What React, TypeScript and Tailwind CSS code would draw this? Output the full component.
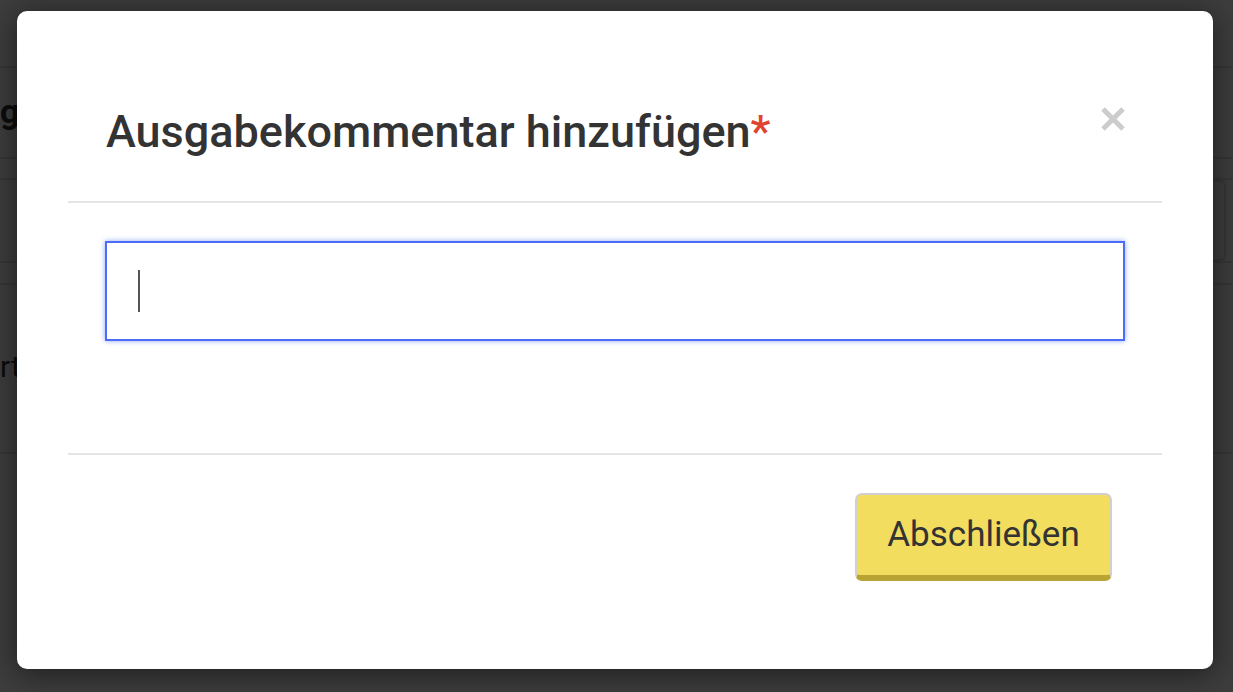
export default function App() {
  return (
    <div className="relative w-[1233px] h-[692px] overflow-hidden bg-white text-[#333] font-['Roboto',sans-serif]">
      {/* page behind the modal */}
      <div className="h-[68px] border-b-2 border-[#e2e2e2]" />
      <div className="h-[91px] border-b-2 border-[#e2e2e2] flex items-center">
        <span className="text-[34px] font-bold leading-none pb-1">g</span>
      </div>
      <div className="h-[85px] border-y-2 border-[#e2e2e2] mt-[19px] flex justify-end pr-[7px]">
        <div className="w-[60px] h-full rounded-md border-2 border-[#e2e2e2]" />
      </div>
      <div className="h-[171px] border-y-2 border-[#e2e2e2] mt-[20px] flex items-center">
        <span className="text-[30px] leading-none -mt-[4px]">rt</span>
      </div>

      {/* overlay */}
      <div className="absolute inset-0 bg-black/[0.76] pt-[11px] pl-[17px]">
        <div className="w-[1196px] h-[658px] bg-white rounded-[10px] shadow-[0_4px_30px_rgba(0,0,0,0.55)] px-[51px] flex flex-col">
          {/* header */}
          <div className="h-[192px] border-b-2 border-[#e5e5e5] flex items-center justify-between px-[38px] pt-[50px]">
            <h2 className="text-[45px] font-medium leading-none text-[#333]">
              Ausgabekommentar hinzufügen<span className="text-[#e0442c]">*</span>
            </h2>
            <button type="button" aria-label="Schließen" className="-mt-[24px] -mr-[1px]">
              <svg width="24" height="24" viewBox="0 0 24 24">
                <path d="M2 2 L22 22 M22 2 L2 22" stroke="#cccccc" strokeWidth="5" />
              </svg>
            </button>
          </div>

          {/* body */}
          <div className="h-[252px] border-b-2 border-[#e5e5e5] px-[37px] pt-[38px]">
            <div className="h-[100px] border-2 border-[#4a6cf6] shadow-[0_0_5px_rgba(74,108,246,0.6)] flex items-center pl-[31px]">
              <span className="w-[2px] h-[42px] bg-[#555]" />
            </div>
          </div>

          {/* footer */}
          <div className="flex justify-end pr-[50px] pt-[38px]">
            <button
              type="button"
              className="w-[257px] h-[88px] rounded-[7px] border-2 border-[#d0d0d0] border-b-[6px] border-b-[#b9a334] bg-[#f2dd5f] text-[35px] text-[#333] leading-none pb-[2px]"
            >
              Abschließen
            </button>
          </div>
        </div>
      </div>
    </div>
  )
}
